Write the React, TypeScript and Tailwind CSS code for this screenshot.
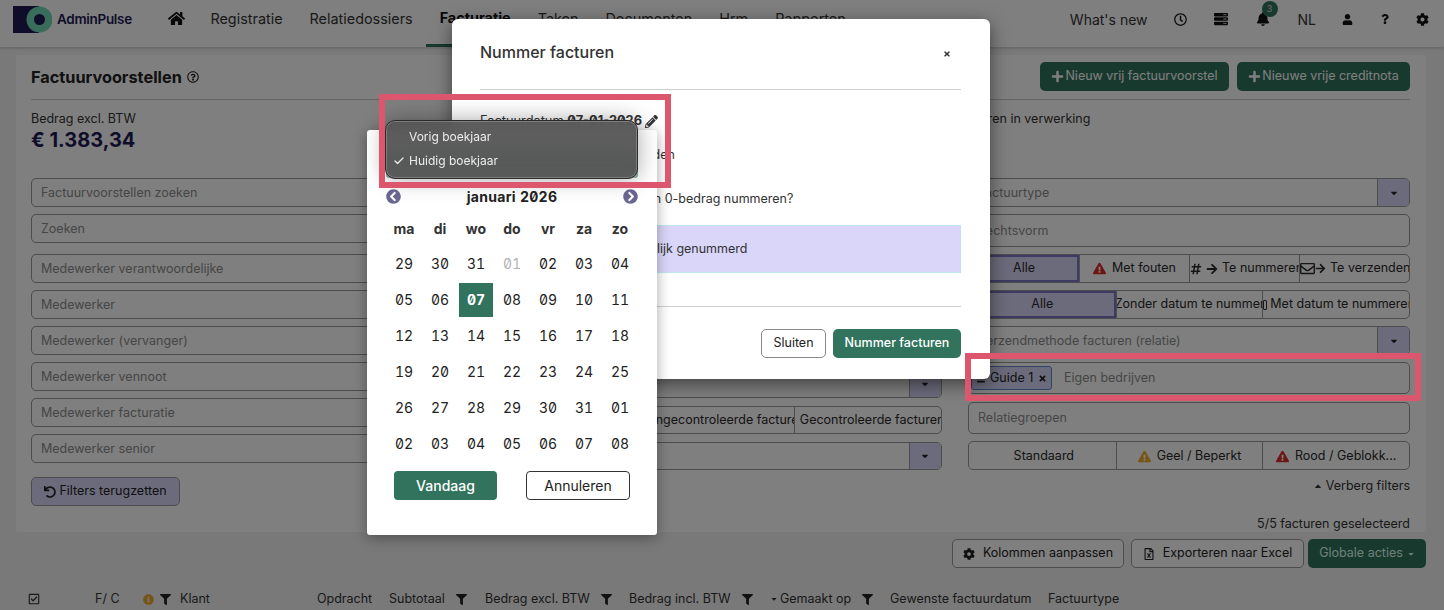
import React from "react";
import {
  FaHome, FaRegClock, FaServer, FaBell, FaUser, FaQuestion, FaCog, FaPencilAlt, FaPlus, FaUndo, FaHashtag,
  FaArrowRight, FaRegEnvelope, FaExclamationTriangle, FaInfoCircle, FaFilter, FaRegFileExcel, FaCaretUp,
  FaCaretDown, FaTimes, FaChevronCircleLeft, FaChevronCircleRight, FaRegCheckSquare, FaRegQuestionCircle, FaStream,
} from "react-icons/fa";
import { Check } from "lucide-react";

const Input = ({ text, h = "h-[28.5px]", arrow = false, extra = "", tweak = "pt-[1px]" }: { text?: string; h?: string; arrow?: boolean; extra?: string; tweak?: string }) => (
  <div className={`flex ${h} ${extra} shrink-0 items-stretch overflow-hidden rounded-[5px] border border-[#9a9a9a] text-[12.5px] text-[#8c8c8c]`}>
    <div className={`flex flex-1 items-center pl-[9px] ${tweak}`}>{text}</div>
    {arrow && (
      <div className="flex w-[32px] items-center justify-center border-l border-[#9a9a9a] bg-[#d9d6f9] text-[#222]">
        <FaCaretDown className="text-[10px]" />
      </div>
    )}
  </div>
);

const Seg = ({ items, h = "h-[28.5px]", extra = "" }: { items: { label: React.ReactNode; active?: boolean; start?: boolean }[]; h?: string; extra?: string }) => (
  <div className={`grid ${h} ${extra} shrink-0 auto-cols-[minmax(0,1fr)] grid-flow-col rounded-[5px] border border-[#9a9a9a] text-[12.5px] text-[#2a2a2a]`}>
    {items.map((it, i) => (
      <div
        key={i}
        className={`flex min-w-0 items-center gap-[6px] overflow-hidden whitespace-nowrap pt-[1px] ${it.start ? "justify-start" : "justify-center"} ${i > 0 ? "border-l border-[#9a9a9a]" : ""} ${it.active ? "rounded-l-[5px] border-2 border-[#7a74c9] bg-[#d9d6f9]" : ""}`}
      >
        {it.label}
      </div>
    ))}
  </div>
);

const nav = ["Registratie", "Relatiedossiers", "Facturatie", "Taken", "Documenten", "Hrm", "Rapporten"];
const weeks = [
  ["29", "30", "31", "01", "02", "03", "04"],
  ["05", "06", "07", "08", "09", "10", "11"],
  ["12", "13", "14", "15", "16", "17", "18"],
  ["19", "20", "21", "22", "23", "24", "25"],
  ["26", "27", "28", "29", "30", "31", "01"],
  ["02", "03", "04", "05", "06", "07", "08"],
];

const Flt = () => <FaFilter className="text-[11px] text-[#222]" />;

export default function App() {
  return (
    <div className="relative h-[610px] w-[1444px] overflow-hidden bg-[#f2f2f2] font-[Inter,sans-serif] text-[#222]">
      {/* header */}
      <header className="flex h-[47px] items-stretch bg-white pl-[13px] shadow-[0_2px_2px_rgba(0,0,0,0.12)]">
        <div className="flex items-center gap-[5px] pb-[9px]">
          <svg width="39" height="27" viewBox="0 0 39 27">
            <rect x="0" y="0" width="26" height="27" fill="#1e1a55" />
            <circle cx="26.5" cy="13.5" r="13" fill="#72d8b6" />
            <circle cx="26.5" cy="13.5" r="5.5" fill="#1e1a55" />
          </svg>
          <span className="text-[13.5px] font-semibold tracking-[-0.3px] text-[#1e1a55]">AdminPulse</span>
        </div>
        <FaHome className="ml-[36px] mt-[10px] text-[17px] text-[#111]" />
        <nav className="ml-[12px] flex">
          {nav.map((n) => (
            <div
              key={n}
              className={`flex items-center px-[13.5px] pb-[9px] text-[14.4px] ${n === "Facturatie" ? "border-b-[3px] border-[#31735c] pb-[6px] font-bold text-[#111]" : "text-[#333]"}`}
            >
              {n}
            </div>
          ))}
        </nav>
        <div className="ml-auto flex items-center pb-[9px] text-[14px] text-[#333]">
          <span>What's new</span>
          <FaRegClock className="ml-[26px] text-[13px] text-[#111]" />
          <FaServer className="ml-[27px] text-[14px] text-[#111]" />
          <span className="relative ml-[28px]">
            <FaBell className="text-[14px] text-[#111]" />
            <span className="absolute -right-[8px] -top-[11px] flex h-[16px] w-[16px] items-center justify-center rounded-full bg-[#31735c] text-[9px] text-[#ddd]">3</span>
          </span>
          <span className="ml-[28px]">NL</span>
          <FaUser className="ml-[26px] text-[11px] text-[#111]" />
          <FaQuestion className="ml-[27px] text-[10px] text-[#111]" />
          <FaCog className="ml-[26px] mr-[15px] text-[13px] text-[#111]" />
        </div>
      </header>

      {/* card */}
      <main className="ml-[16px] mr-[18px] mt-[8px] flex h-[477px] flex-col rounded-[3px] bg-white pl-[15px] pr-[16px]">
        <div className="flex h-[45px] items-center justify-between border-b border-[#c8c8c8] pb-[1px]">
          <div className="flex items-center gap-[5px] pt-[1px] text-[16.3px] font-bold text-[#222]">
            Factuurvoorstellen <FaRegQuestionCircle className="text-[12px]" />
          </div>
          <div className="flex gap-[8px] text-[12.5px] text-white">
            <div className="flex h-[29px] w-[189px] items-center justify-center gap-[1px] rounded-[5px] bg-[#31735c]"><FaPlus className="text-[13px]" />Nieuw vrij factuurvoorstel</div>
            <div className="flex h-[29px] w-[173px] items-center justify-center gap-[1px] rounded-[5px] bg-[#31735c]"><FaPlus className="text-[13px]" />Nieuwe vrije creditnota</div>
          </div>
        </div>

        <div className="flex h-[78px] pt-[11px] text-[12.5px]">
          <div className="w-[924px]">
            <div className="leading-[15px] text-[#333]">Bedrag excl. BTW</div>
            <div className="mt-[2px] text-[20px] font-bold leading-[24px] text-[#1e1a55]">€ 1.383,34</div>
          </div>
          <div className="leading-[15px] text-[#333]">Facturen in verwerking</div>
        </div>

        <div className="grid grid-cols-[442px_442px_442px] gap-x-[26.5px]">
          <div className="flex flex-col gap-[7.5px]">
            <Input tweak="pt-[2px]" text="Factuurvoorstellen zoeken" />
            <Input tweak="pt-[2px]" text="Zoeken" extra="mb-[4px]" />
            <Input tweak="pt-[2px]" text="Medewerker verantwoordelijke" />
            <Input tweak="pt-[2px]" text="Medewerker" />
            <Input tweak="pt-[2px]" text="Medewerker (vervanger)" />
            <Input tweak="pt-[2px]" text="Medewerker vennoot" />
            <Input tweak="pt-[2px]" text="Medewerker facturatie" />
            <Input tweak="pt-[2px]" text="Medewerker senior" />
            <button className="mt-[7px] flex h-[29px] w-[149px] items-center justify-center gap-[3px] rounded-[5px] border border-[#9a9a9a] bg-[#d9d6f9] text-[12.5px] text-[#222]">
              <FaUndo className="text-[12px]" />Filters terugzetten
            </button>
          </div>

          <div className="flex h-[292px] flex-col justify-end gap-[7.5px]">
            <Input arrow />
            <Seg
              items={[
                { label: "Alle" },
                { label: <span className="-ml-[2px]">Ongecontroleerde facturen</span>, start: true },
                { label: <span className="ml-[5px]">Gecontroleerde facturen</span>, start: true },
              ]}
            />
            <Input arrow />
          </div>

          <div className="flex flex-col">
            <Input text="Factuurtype" arrow h="h-[29px]" extra="mb-[7px]" />
            <Input text="Rechtsvorm" h="h-[33px]" extra="mb-[7px]" />
            <Seg
              extra="mb-[7.5px]"
              items={[
                { label: "Alle", active: true },
                { label: <><FaExclamationTriangle className="text-[13px] text-[#d92c2c]" />Met fouten</> },
                {
                  label: (
                    <>
                      <FaHashtag className="-mr-[2px] shrink-0 text-[12px]" />
                      <FaArrowRight className="-mr-[2px] shrink-0 text-[12px]" />
                      Te nummeren
                    </>
                  ),
                  start: true,
                },
                {
                  label: (
                    <>
                      <FaRegEnvelope className="-mr-[6px] shrink-0 text-[15px]" />
                      <FaArrowRight className="-mr-[2px] shrink-0 text-[11px]" />
                      Te verzenden
                    </>
                  ),
                  start: true,
                },
              ]}
            />
            <Seg
              extra="mb-[7.5px]"
              items={[
                { label: "Alle", active: true },
                { label: <span className="-ml-[2px]">Zonder datum te nummeren</span>, start: true },
                {
                  label: (
                    <>
                      <span className="-mr-[3px] h-[10px] w-[4px] shrink-0 rounded-[1px] border border-[#333]" />
                      Met datum te nummeren
                    </>
                  ),
                  start: true,
                },
              ]}
            />
            <Input text="Verzendmethode facturen (relatie)" arrow h="h-[29px]" extra="mb-[7px]" />
            <div className="mb-[8px] flex h-[32px] shrink-0 items-center rounded-[5px] border border-[#9a9a9a] pl-[2px] text-[12.5px] text-[#8c8c8c]">
              <span className="flex h-[24px] w-[81px] items-center gap-[4px] rounded-[3px] border border-[#5f86c9] bg-[#d9d6f9] pl-[5px] text-[#222]">
                <FaStream className="text-[9px]" />Guide 1<FaTimes className="ml-[1px] text-[9px]" />
              </span>
              <span className="ml-[12px]">Eigen bedrijven</span>
            </div>
            <Input text="Relatiegroepen" h="h-[32px]" extra="mb-[7px]" tweak="" />
            <Seg
              h="h-[29px]"
              items={[
                { label: <span className="ml-[3px]">Standaard</span> },
                { label: <><FaExclamationTriangle className="text-[13px] text-[#f0a92e]" />Geel / Beperkt</> },
                { label: <><FaExclamationTriangle className="text-[13px] text-[#d92c2c]" />Rood / Geblokk...</> },
              ]}
            />
            <div className="mt-[8px] flex items-center justify-end gap-[3px] text-[12.5px] leading-[15px] text-[#333]"><FaCaretUp className="text-[10px]" />Verberg filters</div>
            <div className="mt-[23px] text-right text-[12.5px] leading-[15px] text-[#333]">5/5 facturen geselecteerd</div>
          </div>
        </div>
      </main>

      {/* actions */}
      <div className="mr-[18px] mt-[7px] flex h-[29px] justify-end text-[12.5px] text-[#222]">
        <div className="flex w-[172px] items-center justify-center gap-[8px] rounded-[5px] border border-[#9a9a9a] bg-white"><FaCog className="text-[12px]" />Kolommen aanpassen</div>
        <div className="ml-[7px] flex w-[173px] items-center justify-center gap-[8px] rounded-[5px] border border-[#9a9a9a] bg-white"><FaRegFileExcel className="text-[12px]" />Exporteren naar Excel</div>
        <div className="ml-[4px] flex w-[118px] items-center justify-center gap-[4px] rounded-[5px] bg-[#31735c] text-[#dfe]">Globale acties<FaCaretDown className="text-[8px]" /></div>
      </div>

      {/* table head */}
      <div className="mt-[22px] flex h-[18px] items-center pl-[28px] text-[12.5px] text-[#333]">
        <div className="w-[67px]"><FaRegCheckSquare className="text-[12px]" /></div>
        <div className="w-[48px]">F/ C</div>
        <div className="flex w-[37px] items-center gap-[6px]"><FaInfoCircle className="text-[11px] text-[#f0a92e]" /><Flt /></div>
        <div className="w-[137px]">Klant</div>
        <div className="w-[72px]">Opdracht</div>
        <div className="flex w-[96px] items-center gap-[11px]">Subtotaal<Flt /></div>
        <div className="flex w-[144px] items-center gap-[11px]">Bedrag excl. BTW<Flt /></div>
        <div className="flex w-[143px] items-center gap-[11px]">Bedrag incl. BTW<Flt /></div>
        <div className="flex w-[118px] items-center pl-[-3px]"><FaCaretDown className="-ml-[2px] mr-[2px] text-[8px]" /><span className="mr-[11px]">Gemaakt op</span><Flt /></div>
        <div className="w-[158px]">Gewenste factuurdatum</div>
        <div>Factuurtype</div>
      </div>

      {/* backdrop */}
      <div className="absolute inset-0 bg-black/50" />

      {/* modal */}
      <div className="absolute left-[452px] top-[19px] h-[360px] w-[538px] rounded-[6px] bg-white pl-[28px] pr-[29px] text-[#333] shadow-[0_5px_18px_rgba(0,0,0,0.5)]">
        <div className="flex h-[71px] items-center justify-between border-b border-[#cfcfcf] pb-[4px] pr-[10px]">
          <span className="text-[16px] font-medium">Nummer facturen</span>
          <FaTimes className="mt-[4px] text-[8px] text-[#333]" />
        </div>
        <div className="mt-[22px] flex items-center gap-[3px] text-[12.8px] leading-[18px]">
          <span>Factuurdatum <b className="slashed-zero">07-01-2026</b></span>
          <FaPencilAlt className="text-[13px] text-[#333]" />
        </div>
        <div className="mt-[16px] pl-[77px] text-[12.5px] leading-[18px]">Facturen verzenden</div>
        <div className="mt-[26px] pl-[78px] text-[12.5px] leading-[18px]">Facturen met een 0-bedrag nummeren?</div>
        <div className="mt-[17px] flex h-[48px] items-center border border-[#bfe6ec] bg-[#d9d6f9] pl-[4px] text-[12.5px]">Facturen worden onherroepelijk genummerd</div>
        <div className="mt-[33px] flex h-[52px] items-end justify-end gap-[7px] border-t border-[#cfcfcf] text-[12.5px]">
          <div className="flex h-[29px] w-[65px] items-center justify-center rounded-[5px] border border-[#888] text-[#222]">Sluiten</div>
          <div className="flex h-[29px] w-[128px] items-center justify-center rounded-[5px] bg-[#31735c] font-medium text-white">Nummer facturen</div>
        </div>
      </div>

      {/* date picker */}
      <div className="absolute left-[367px] top-[130px] h-[405px] w-[290px] rounded-[3px] bg-white px-[19px] text-[#222] shadow-[0_3px_14px_rgba(0,0,0,0.35)]">
        <div className="mt-[20px] flex h-[28px] items-center rounded-[3px] bg-[#8fb3a5]" />
        <div className="mt-[8px] flex h-[20px] items-center justify-between">
          <FaChevronCircleLeft className="text-[15px] text-[#6b6793]" />
          <span className="text-[14px] font-bold tracking-[0.3px] tabular-nums slashed-zero">januari 2026</span>
          <FaChevronCircleRight className="text-[15px] text-[#6b6793]" />
        </div>
        <div className="mt-[4px] grid grid-cols-7">
          {["ma", "di", "wo", "do", "vr", "za", "zo"].map((d) => (
            <div key={d} className="flex h-[36px] items-center justify-center text-[14px] font-bold text-[#333]">{d}</div>
          ))}
          {weeks.flat().map((d, i) => (
            <div key={i} className="flex h-[36px] items-center justify-center">
              <span
                className={`flex h-[34px] w-[34px] items-center justify-center pb-[2px] text-[14px] tabular-nums slashed-zero ${i === 9 ? "bg-[#31735c] font-bold text-white" : i === 3 ? "text-[#b3b3b3]" : "text-[#222]"}`}
              >
                {d}
              </span>
            </div>
          ))}
        </div>
        <div className="mt-[9px] flex justify-between px-[8px] text-[14px]">
          <div className="flex h-[29px] w-[103px] items-center justify-center rounded-[4px] bg-[#31735c] font-medium text-white">Vandaag</div>
          <div className="flex h-[29px] w-[104px] items-center justify-center rounded-[4px] border border-[#333] text-[#222]">Annuleren</div>
        </div>
      </div>

      {/* native select menu */}
      <div className="absolute left-[385px] top-[120px] flex h-[59px] w-[253px] flex-col justify-center rounded-[10px] border border-[#2b2b2b] bg-[#545454]/95 pb-[2px] text-[12px] text-[#ececec] shadow-[0_0_22px_rgba(0,0,0,0.35),inset_0_0_0_1px_rgba(255,255,255,0.22)] backdrop-blur-sm">
        <div className="flex h-[24px] items-center pl-[23px]">Vorig boekjaar</div>
        <div className="relative flex h-[24px] items-center pl-[23px]">
          <Check size={12} strokeWidth={2.5} className="absolute left-[7px]" />
          Huidig boekjaar
        </div>
      </div>

      {/* annotation frames */}
      <div className="pointer-events-none absolute left-[379px] top-[94px] h-[94px] w-[292px] border-[6px] border-[#dc566e]" />
      <div className="pointer-events-none absolute left-[965px] top-[353px] h-[48px] w-[456px] border-[6px] border-[#dc566e]" />
    </div>
  );
}
